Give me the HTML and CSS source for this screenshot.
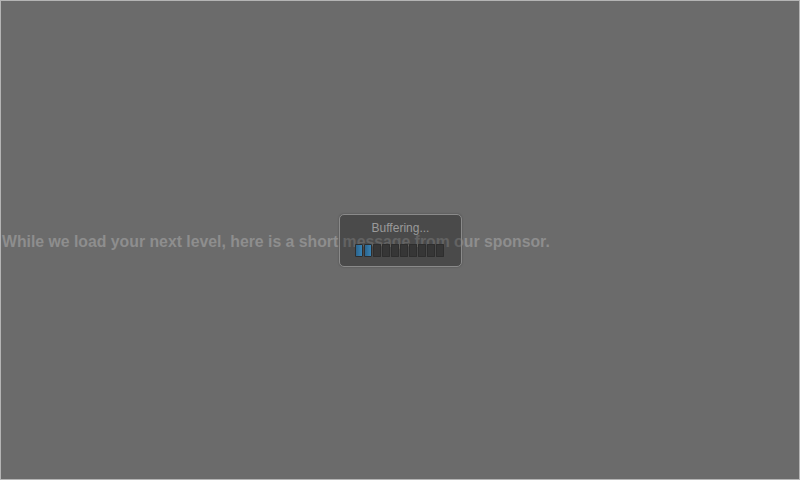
FILE: index.html
```html
<!DOCTYPE html>
<html lang="en">
<head>
  <meta charset="UTF-8" />
  <title>Loading</title>
  <link rel="stylesheet" href="styles.css">
</head>
<body>

  <div class="stage">
    <p class="sponsor">While we load your next level, here is a short message from our sponsor.</p>

    <!-- buffering overlay -->
    <div class="buffer">
      <div class="buffer-label">Buffering...</div>
      <div class="buffer-bar">
        <span class="seg on"></span>
        <span class="seg on"></span>
        <span class="seg"></span>
        <span class="seg"></span>
        <span class="seg"></span>
        <span class="seg"></span>
        <span class="seg"></span>
        <span class="seg"></span>
        <span class="seg"></span>
        <span class="seg"></span>
      </div>
    </div>
  </div>

</body>
</html>
```

FILE: styles.css
```css
* {
  box-sizing: border-box;
}

body {
  margin: 0;
  font-family: 'Liberation Sans', Arial, sans-serif;
  background: #6b6b6b;
}

.stage {
  position: relative;
  width: 800px;
  height: 480px;
  border: 1px solid #b4b4b4;
  background: #6b6b6b;
  display: flex;
  align-items: center;
}

.sponsor {
  margin: 0 0 0 1px;
  padding-top: 4px;
  font-size: 15.8px;
  font-weight: bold;
  color: #8e8e8e;
}

.buffer {
  position: absolute;
  left: 338px;
  top: 213px;
  width: 123px;
  height: 53px;
  border: 1px solid #8a8a8a;
  border-radius: 5px;
  background: rgba(0, 0, 0, 0.3);
  box-shadow: 0 0 2px rgba(0, 0, 0, 0.3);
  display: flex;
  flex-direction: column;
  align-items: center;
  padding-top: 6px;
}

.buffer-label {
  font-size: 12px;
  color: #9a9a9a;
  height: 16px;
}

.buffer-bar {
  display: flex;
  gap: 1px;
  margin-top: 7px;
  margin-right: 3px;
}

.seg {
  width: 8px;
  height: 13px;
  border-radius: 1px;
  background: #363636;
  box-shadow: inset 0 0 0 1px #2e2e2e;
}

.seg.on {
  background: linear-gradient(90deg, #2a5f86, #3a88bb);
}
```
